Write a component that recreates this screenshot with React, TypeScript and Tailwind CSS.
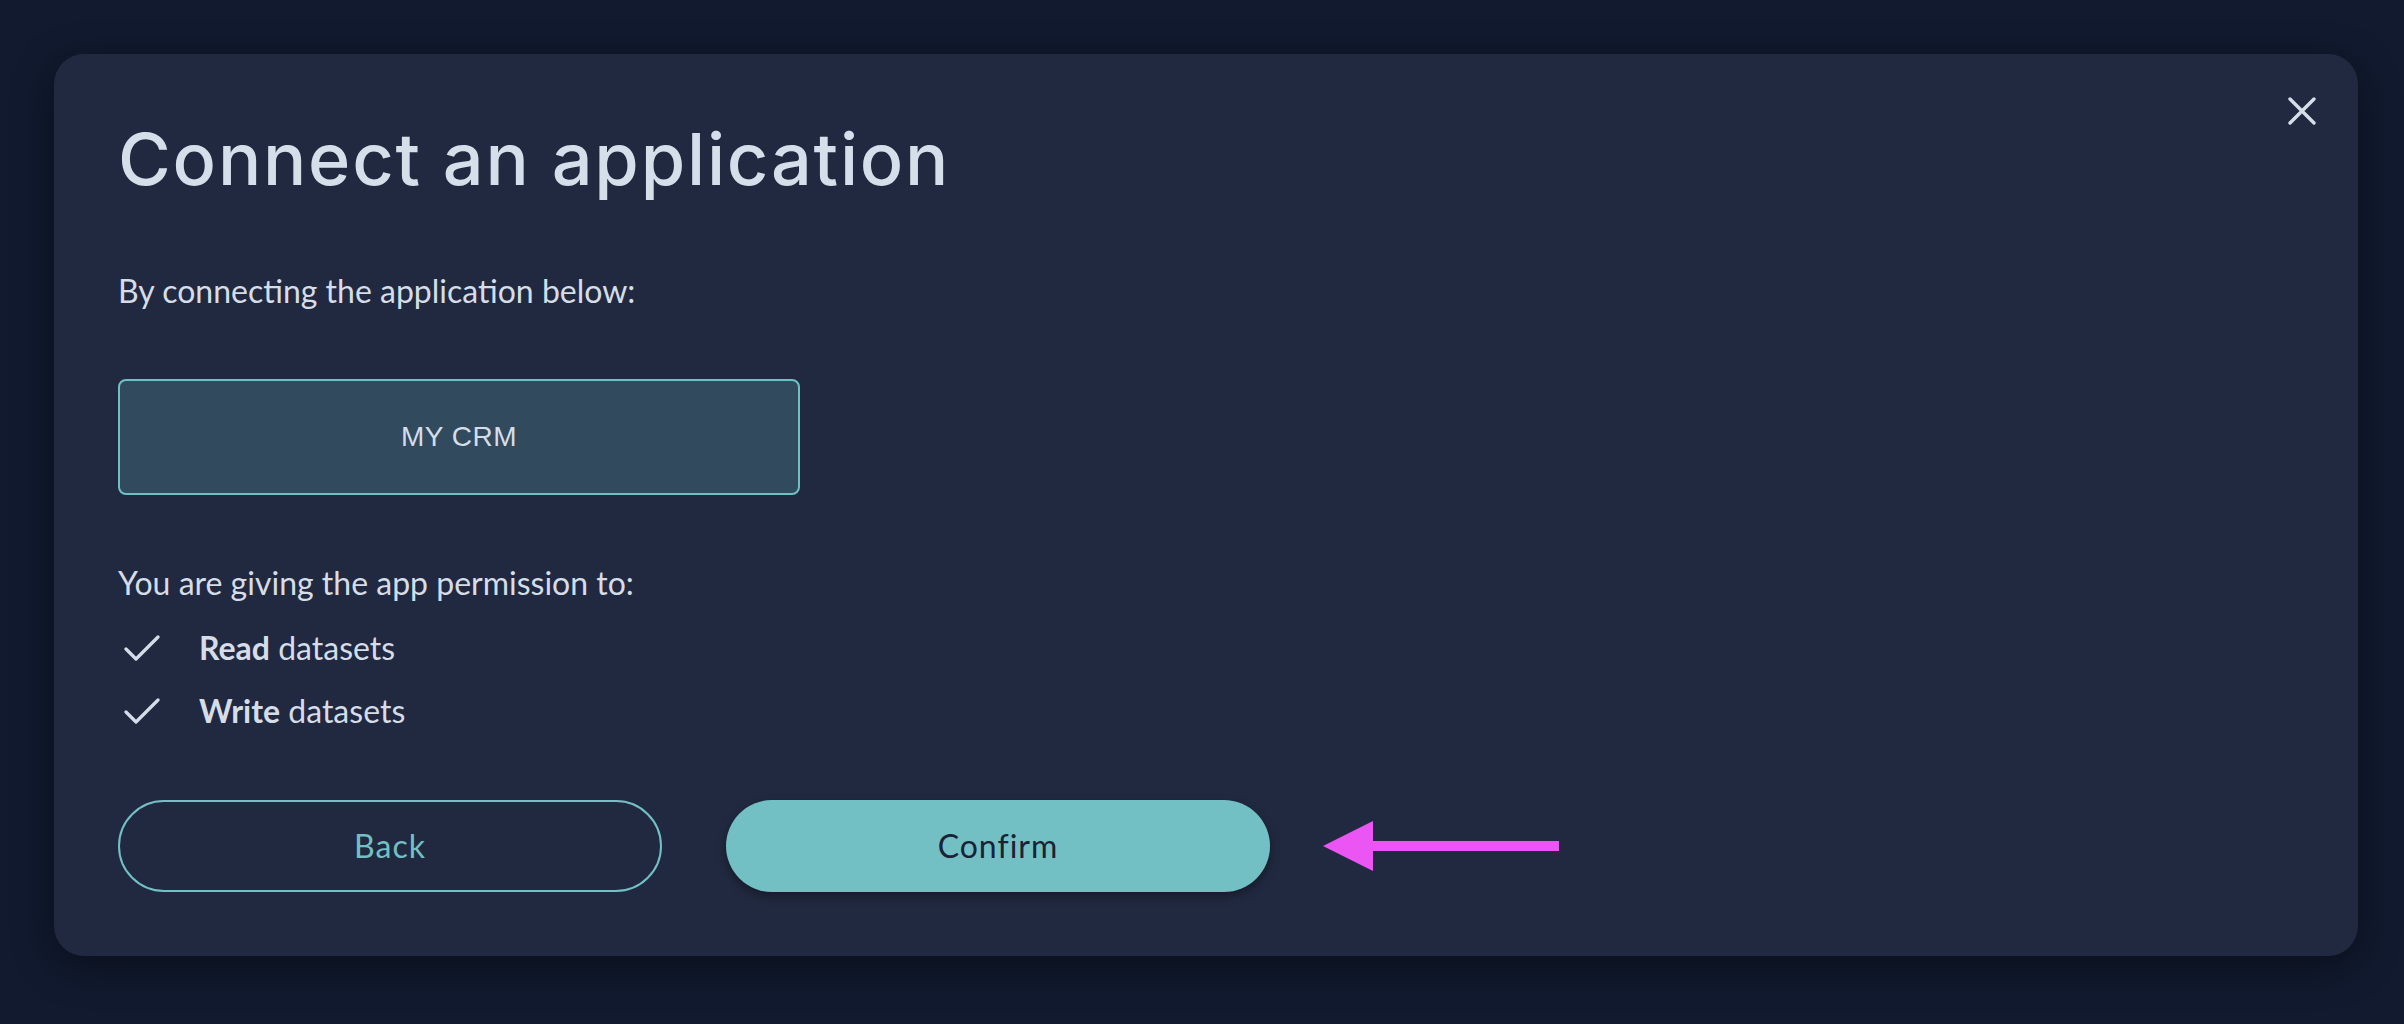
import React from "react";

function Check() {
  return (
    <svg width="36" height="28" viewBox="0 0 36 28" fill="none">
      <path d="M2 15 L12 25 L34 3" stroke="#d5dde8" strokeWidth="3.2" strokeLinecap="round" strokeLinejoin="round" />
    </svg>
  );
}

export default function App() {
  return (
    <div className="w-full h-[1024px] bg-[#111a2f] pt-[54px] pl-[54px] pr-[46px] font-['Lato',sans-serif]">
      <div className="relative w-[2304px] h-[902px] rounded-[30px] bg-[#212940] shadow-[0_10px_40px_rgba(0,0,0,0.45)] pt-[65px] px-[64px]">
        <button className="absolute top-[43px] right-[42px] w-[28px] h-[28px] flex items-center justify-center">
          <svg width="28" height="28" viewBox="0 0 28 28" fill="none">
            <path d="M2 2 L26 26 M26 2 L2 26" stroke="#d6dfe9" strokeWidth="3.4" strokeLinecap="round" />
          </svg>
        </button>
        <h1 className="font-['Inter',sans-serif] text-[72px] leading-[80px] text-[#d5dfea] font-medium tracking-[1.8px]">
          Connect an application
        </h1>
        <p className="mt-[74px] text-[32px] leading-[36px] text-[#d5dde8]">By connecting the application below:</p>
        <div className="mt-[70px] w-[682px] h-[116px] rounded-[8px] border-2 border-[#6fc0c4] bg-[#324a5e] flex items-center justify-center">
          <span className="font-['Liberation_Sans',sans-serif] text-[28px] tracking-[0.5px] text-[#d5dde8]">MY CRM</span>
        </div>
        <p className="mt-[70px] text-[32px] leading-[36px] text-[#d5dde8]">You are giving the app permission to:</p>
        <ul className="mt-[29px] flex flex-col gap-[27px]">
          <li className="flex items-center h-[36px]">
            <span className="w-[81px] pl-[6px] flex items-center"><Check /></span>
            <span className="text-[32px] leading-[36px] text-[#d5dde8]"><b className="font-bold">Read</b> datasets</span>
          </li>
          <li className="flex items-center h-[36px]">
            <span className="w-[81px] pl-[6px] flex items-center"><Check /></span>
            <span className="text-[32px] leading-[36px] text-[#d5dde8]"><b className="font-bold">Write</b> datasets</span>
          </li>
        </ul>
        <div className="mt-[71px] flex items-center">
          <button className="w-[544px] h-[92px] rounded-full border-2 border-[#72c0c4] text-[#72c0c4] text-[32px] tracking-[1px] flex items-center justify-center">
            Back
          </button>
          <button className="ml-[64px] w-[544px] h-[92px] rounded-full bg-[#72c0c4] text-[#1b2236] text-[32px] tracking-[1px] flex items-center justify-center shadow-[0_4px_10px_rgba(0,0,0,0.35)]">
            Confirm
          </button>
          <svg className="ml-[53px]" width="236" height="52" viewBox="0 0 236 52" fill="none">
            <polygon points="0,26 50,1 50,51" fill="#ea55f4" />
            <rect x="48" y="21" width="188" height="10" fill="#ea55f4" />
          </svg>
        </div>
      </div>
    </div>
  );
}
